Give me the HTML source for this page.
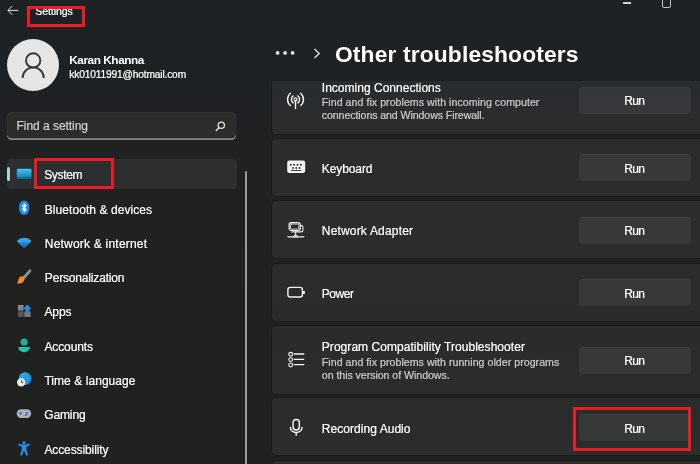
<!DOCTYPE html>
<html lang="en">
<head>
<meta charset="utf-8">
<title>Settings</title>
<style>
*{box-sizing:border-box;margin:0;padding:0}
html,body{width:700px;height:464px;overflow:hidden}
body{background:#202222;font-family:"Liberation Sans",sans-serif;color:#fff;position:relative;
 background:linear-gradient(180deg,#1e2225 0px,#1e2124 90px,#202122 150px,#212120 230px,#20211f 330px,#1f2221 464px)}
.t{position:absolute;white-space:nowrap;line-height:1;color:#fff;-webkit-text-stroke:0.22px currentColor}
.abs{position:absolute}
.nav{font-size:12.4px;left:45px}
.card{position:absolute;left:272px;width:440px;background:rgba(255,255,255,0.052);border-radius:4px;box-shadow:0 0 0 1px rgba(0,0,0,0.17)}
.btn{position:absolute;left:579px;width:112px;height:27px;background:rgba(255,255,255,0.06);border-radius:4px;box-shadow:inset 0 1px 0 rgba(255,255,255,0.045)}
.run{font-size:12.4px}
.ct{font-size:12.4px;left:322px}
.cd{font-size:10.6px;left:322px;color:#cdcdcd}
svg{position:absolute;overflow:visible}
</style>
</head>
<body>
<!-- title bar -->
<svg style="left:7px;top:5px" width="12" height="11" viewBox="0 0 12 11"><path d="M5.2 1 L1 5.4 L5.2 9.8 M1 5.4 H11.2" fill="none" stroke="#e6e6e6" stroke-width="1"/></svg>

<div class="abs" style="left:27px;top:6px;width:58px;height:21px;border:3px solid #ed1c24;z-index:5"></div>
<!-- window controls -->
<div class="abs" style="left:622.6px;top:2.3px;width:8.6px;height:1.3px;background:#d0d0d0"></div>
<div class="abs" style="left:661.8px;top:-4px;width:9.4px;height:11.8px;border:1.3px solid #c4c4c4;border-radius:2px"></div>

<!-- profile -->
<div class="abs" style="left:7px;top:38.7px;width:52.4px;height:52.4px;border-radius:50%;background:#e6e6e6"></div>
<svg style="left:0;top:0" width="100" height="100" viewBox="0 0 100 100"><g fill="none" stroke="#383838" stroke-width="1.9"><circle cx="33.2" cy="60.4" r="7.15"/><path d="M22.6 78 A10.6 10.6 0 0 1 43.8 78"/></g></svg>



<!-- search -->
<div class="abs" style="left:7px;top:111.7px;width:229.4px;height:28px;background:#2b2d2d;border-radius:4.5px;box-shadow:inset 0 -1.8px 0 #868888, inset 0 0 0 1px #2f3131"></div>

<svg style="left:0;top:0" width="300" height="200" viewBox="0 0 300 200"><circle cx="221.3" cy="125.3" r="3.15" fill="none" stroke="#e4e4e4" stroke-width="1.25"/><path d="M218.9 127.8 L216.2 130.5" stroke="#e4e4e4" stroke-width="1.4" stroke-linecap="round" fill="none"/></svg>

<!-- nav -->
<div class="abs" style="left:7px;top:159px;width:229.5px;height:30px;background:#2d2e2e;border-radius:4px"></div>
<div class="abs" style="left:7px;top:166.9px;width:3px;height:14px;background:#a8d4d8;border-radius:1.5px"></div>









<div class="abs" style="left:34px;top:158px;width:80px;height:31px;border:3px solid #ed1c24;z-index:5"></div>
<!-- scrollbar -->
<div class="abs" style="left:245px;top:171px;width:2px;height:300px;background:#9c9c9c;border-radius:1px"></div>

<!-- header -->
<svg style="left:0;top:0" width="700" height="100" viewBox="0 0 700 100"><g fill="#e2e2e2"><circle cx="277.6" cy="52.9" r="1.9"/><circle cx="285.1" cy="52.9" r="1.9"/><circle cx="292.6" cy="52.9" r="1.9"/></g></svg>
<svg style="left:313px;top:48px" width="8" height="11" viewBox="0 0 8 11"><path d="M1.5 1 L6.2 5.5 L1.5 10" fill="none" stroke="#e6e6e6" stroke-width="1.3"/></svg>


<!-- cards -->
<div class="card" style="top:70px;height:64px;clip-path:inset(11px -2px -2px -2px)"></div>
<div class="card" style="top:139px;height:57px"></div>
<div class="card" style="top:200.7px;height:57.6px"></div>
<div class="card" style="top:263.5px;height:57.5px"></div>
<div class="card" style="top:326px;height:67.5px"></div>
<div class="card" style="top:398.3px;height:57.2px"></div>
<div class="card" style="top:461px;height:57px"></div>












<div class="btn" style="top:87px"></div>
<div class="btn" style="top:154px"></div>
<div class="btn" style="top:216.5px"></div>
<div class="btn" style="top:279px"></div>
<div class="btn" style="top:346.5px"></div>
<div class="btn" style="top:414px"></div>
<div class="abs" style="left:573px;top:407px;width:118px;height:44px;border:3px solid #ed1c24;z-index:5"></div>

<svg style="left:0;top:0" width="700" height="464" viewBox="0 0 700 464">
<defs>
<linearGradient id="gsys" x1="0" y1="0" x2="0" y2="1"><stop offset="0" stop-color="#44c8ee"/><stop offset="0.7" stop-color="#1c8fc6"/><stop offset="0.86" stop-color="#15709c"/><stop offset="1" stop-color="#0f5c84"/></linearGradient>
<linearGradient id="gwifi" x1="0" y1="0" x2="0" y2="1"><stop offset="0" stop-color="#35b4f0"/><stop offset="1" stop-color="#0f6fc4"/></linearGradient>
<linearGradient id="gglobe" x1="0" y1="0" x2="1" y2="1"><stop offset="0" stop-color="#22b4e0"/><stop offset="1" stop-color="#1a7cd8"/></linearGradient>
</defs>
<!-- system -->
<rect x="16.8" y="168.8" width="14.7" height="10.2" rx="1" fill="url(#gsys)"/>
<!-- bluetooth -->
<rect x="19.1" y="200.5" width="10" height="14.4" rx="5" ry="5.6" fill="#1b8cf0"/>
<path d="M22 205.3 L26.1 209.6 L24.1 211.8 V203.5 L26.1 205.7 L22 210" fill="none" stroke="#fff" stroke-width="1.1" stroke-linejoin="round"/>
<!-- wifi -->
<path d="M24.15 247.8 L16.7 240.9 A10.6 10.6 0 0 1 31.6 240.9 Z" fill="#33a9ec"/>
<path d="M24.15 247.8 L19.2 243.2 A7.1 7.1 0 0 1 29.1 243.2 Z" fill="#1f8ada"/>
<path d="M24.15 247.8 L21.6 245.4 A3.7 3.7 0 0 1 26.7 245.4 Z" fill="#1670c6"/>
<!-- brush -->
<path d="M29.9 270.9 L23.6 278" stroke="#8d939a" stroke-width="2.9" stroke-linecap="round" fill="none"/>
<path d="M22 276.3 C24.2 276.6 25 279 23.8 281 C22.4 283.4 19.4 284 16.9 283.4 C18.4 282.2 18 280.4 18.7 278.8 C19.3 277.3 20.6 276.2 22 276.3 Z" fill="#f28d1c"/>
<!-- apps -->
<rect x="17.9" y="304.9" width="5.7" height="5.7" rx="0.6" fill="#82868b"/>
<rect x="17.9" y="311.3" width="5.7" height="5.8" rx="0.6" fill="#54575b"/>
<rect x="24.3" y="311.3" width="6.3" height="5.8" rx="0.6" fill="#75797e"/>
<path d="M27.3 304.6 L31 308.3 L27.3 312 L23.6 308.3 Z" fill="#1f90f0"/>
<!-- accounts -->
<circle cx="24.1" cy="342" r="3.6" fill="#1bb09c"/>
<path d="M18.3 347 H29.9 V347.6 A5.8 4.6 0 0 1 18.3 347.6 Z" fill="#20c4ac"/>
<!-- time -->
<circle cx="25.05" cy="378.6" r="6.4" fill="url(#gglobe)"/>
<path d="M25.05 372.4 C21.8 375 21.8 382.2 25.05 384.8 C28.3 382.2 28.3 375 25.05 372.4 M18.9 378.6 H31.2" fill="none" stroke="#5fd0f0" stroke-width="0.5" opacity="0.6"/>
<circle cx="21.2" cy="382.4" r="4.2" fill="#e9e9e9"/>
<path d="M21.5 379.8 V382.5 H23.3" fill="none" stroke="#4a4a4a" stroke-width="0.9"/>
<!-- gaming -->
<rect x="16.7" y="409.2" width="14.5" height="8.8" rx="4.4" fill="#aeb2b8"/>
<circle cx="20.6" cy="413.5" r="1.4" fill="#6c7076"/>
<rect x="26.1" y="411.9" width="1.9" height="1.9" rx="0.4" fill="#1574e0"/><rect x="25" y="414" width="1.9" height="1.9" rx="0.4" fill="#1574e0"/>
<!-- accessibility -->
<circle cx="24" cy="442.9" r="1.75" fill="#1e94ee"/>
<path d="M19.3 444.7 L22.6 446.1 H25.6 L28.9 444.7" fill="none" stroke="#1e94ee" stroke-width="2" stroke-linecap="round" stroke-linejoin="round"/>
<rect x="21.8" y="445.4" width="4.6" height="5.8" rx="0.6" fill="#1e94ee"/>
<path d="M22.9 450 L21.3 454.5 M25.3 450 L26.9 454.5" fill="none" stroke="#1e94ee" stroke-width="2.2" stroke-linecap="round"/>

<!-- right icons -->
<g fill="none" stroke="#f4f4f4" stroke-width="1.4" stroke-linecap="round">
<circle cx="295.5" cy="99.4" r="1.5" stroke-width="1.2"/>
<path d="M295.5 101 V108.6"/>
<path d="M290.4 93.3 A8 8 0 0 0 290.4 105.5 M300.6 93.3 A8 8 0 0 1 300.6 105.5"/>
<path d="M293.2 95.9 A4.3 4.3 0 0 0 293.2 102.9 M297.8 95.9 A4.3 4.3 0 0 1 297.8 102.9"/>
</g>
<!-- keyboard -->
<rect x="287.2" y="160.6" width="18" height="12.4" rx="2.2" fill="#f4f4f4"/>
<g fill="#2b2d2d">
<circle cx="290.8" cy="164.7" r="0.95"/><circle cx="294.1" cy="164.7" r="0.95"/><circle cx="297.5" cy="164.7" r="0.95"/><circle cx="300.8" cy="164.7" r="0.95"/>
<circle cx="293" cy="168" r="0.95"/><circle cx="296.3" cy="168" r="0.95"/><circle cx="299.6" cy="168" r="0.95"/>
<rect x="291" y="170" width="10.4" height="0.9"/>
</g>
<!-- network adapter -->
<g fill="none" stroke-linecap="round" stroke-linejoin="round">
<path d="M301 225.6 H301.6 A1.3 1.3 0 0 1 302.9 226.9 V230.2 A1.7 1.7 0 0 1 301.2 231.9 H292" stroke="#ececec" stroke-width="1.1"/>
<rect x="289.1" y="222.6" width="11.2" height="7.9" rx="2.2" stroke="#f6f6f6" stroke-width="1.15"/>
<rect x="290.55" y="224.05" width="8.3" height="5" rx="0.9" stroke="#f0f0f0" stroke-width="0.85"/>
<path d="M295.6 232.2 V234.6" stroke="#ececec" stroke-width="1"/>
<path d="M287.8 236.8 H303.9" stroke="#ececec" stroke-width="1.3"/>
<path d="M293.6 237 L295.6 234.6 L297.6 237 Z" fill="#ececec" stroke="#ececec" stroke-width="1.3"/>
<path d="M294.8 236.9 H296.4" stroke="#2b2d2d" stroke-width="0.6"/>
</g>
<!-- battery -->
<rect x="287.9" y="287.4" width="14.5" height="9.6" rx="2.2" fill="none" stroke="#f2f2f2" stroke-width="1.4"/>
<path d="M303 290.9 H304.2 Q305 290.9 305 291.7 V293.1 Q305 293.9 304.2 293.9 H303 Z" fill="#f2f2f2"/>
<!-- list -->
<g fill="none" stroke="#f2f2f2" stroke-width="1.3">
<circle cx="290.7" cy="354.3" r="1.9" stroke-width="1.15"/><circle cx="290.7" cy="359.6" r="1.9" stroke-width="1.15"/><circle cx="290.7" cy="364.9" r="1.9" stroke-width="1.15"/>
<path d="M294.2 354 H303.8 M294.2 359.3 H303.8 M294.2 364.6 H303.8" stroke-linecap="round"/>
</g>
<!-- mic -->
<g fill="none" stroke="#f4f4f4" stroke-width="1.45" stroke-linecap="round">
<rect x="293.05" y="419.5" width="6.3" height="10.5" rx="3.15"/>
<path d="M290.4 427.4 A5.8 5.2 0 0 0 302 427.4"/>
<path d="M296.2 432.8 V435.2"/>
</g>
</svg>
<div class="abs" style="left:0;top:0;width:700px;height:464px;will-change:transform"><span class="t" id="settings" style="left:35.20px;top:6.03px;font-size:10.6px;letter-spacing:-0.089px">Settings</span>
<span class="t" id="name" style="left:69.20px;top:54.51px;font-size:11.8px;letter-spacing:-0.437px;font-weight:bold;-webkit-text-stroke:0">Karan Khanna</span>
<span class="t" id="email" style="left:69.30px;top:69.57px;font-size:10.2px;letter-spacing:-0.152px">kk01011991@hotmail.com</span>
<span class="t" id="find" style="left:16.60px;top:120.34px;font-size:12px;letter-spacing:-0.050px;color:#d0d0d0">Find a setting</span>
<span class="t" id="n1" style="left:44.20px;top:168.84px;font-size:12px;letter-spacing:-0.343px">System</span>
<span class="t" id="n2" style="left:44.80px;top:203.84px;font-size:12px;letter-spacing:0.062px">Bluetooth &amp; devices</span>
<span class="t" id="n3" style="left:44.80px;top:237.84px;font-size:12px;letter-spacing:0.211px">Network &amp; internet</span>
<span class="t" id="n4" style="left:44.80px;top:271.84px;font-size:12px;letter-spacing:-0.169px">Personalization</span>
<span class="t" id="n5" style="left:44.40px;top:306.24px;font-size:12px;letter-spacing:-0.086px">Apps</span>
<span class="t" id="n6" style="left:44.40px;top:340.84px;font-size:12px;letter-spacing:-0.108px">Accounts</span>
<span class="t" id="n7" style="left:44.40px;top:374.84px;font-size:12px;letter-spacing:0.058px">Time &amp; language</span>
<span class="t" id="n8" style="left:44.20px;top:409.24px;font-size:12px;letter-spacing:-0.106px">Gaming</span>
<span class="t" id="n9" style="left:44.40px;top:443.84px;font-size:12px;letter-spacing:-0.105px">Accessibility</span>
<span class="t" id="title" style="left:335.00px;top:43.20px;font-size:22.8px;letter-spacing:0.140px;font-weight:bold;-webkit-text-stroke:0">Other troubleshooters</span>
<span class="t" id="c1" style="left:321.80px;top:81.84px;font-size:12px;letter-spacing:0.014px">Incoming Connections</span>
<span class="t" id="c1a" style="left:321.80px;top:97.03px;font-size:10.6px;letter-spacing:0.048px;color:#cbcbcb">Find and fix problems with incoming computer</span>
<span class="t" id="c1b" style="left:321.80px;top:110.03px;font-size:10.6px;letter-spacing:-0.085px;color:#cbcbcb">connections and Windows Firewall.</span>
<span class="t" id="c2" style="left:321.80px;top:163.24px;font-size:12px;letter-spacing:-0.096px">Keyboard</span>
<span class="t" id="c3" style="left:321.80px;top:225.24px;font-size:12px;letter-spacing:0.177px">Network Adapter</span>
<span class="t" id="c4" style="left:321.80px;top:287.94px;font-size:12px;letter-spacing:-0.454px">Power</span>
<span class="t" id="c5" style="left:321.80px;top:341.24px;font-size:12px;letter-spacing:0.048px">Program Compatibility Troubleshooter</span>
<span class="t" id="c5a" style="left:321.80px;top:357.23px;font-size:10.6px;letter-spacing:0.040px;color:#cbcbcb">Find and fix problems with running older programs</span>
<span class="t" id="c5b" style="left:321.80px;top:369.73px;font-size:10.6px;letter-spacing:-0.042px;color:#cbcbcb">on this version of Windows.</span>
<span class="t" id="c6" style="left:321.80px;top:422.74px;font-size:12px;letter-spacing:0.046px">Recording Audio</span>
<span class="t" id="r1" style="left:624.20px;top:95.34px;font-size:12px;letter-spacing:-0.608px">Run</span>
<span class="t" id="r2" style="left:624.20px;top:163.04px;font-size:12px;letter-spacing:-0.608px">Run</span>
<span class="t" id="r3" style="left:624.20px;top:225.44px;font-size:12px;letter-spacing:-0.608px">Run</span>
<span class="t" id="r4" style="left:624.20px;top:288.04px;font-size:12px;letter-spacing:-0.608px">Run</span>
<span class="t" id="r5" style="left:624.20px;top:355.44px;font-size:12px;letter-spacing:-0.608px">Run</span>
<span class="t" id="r6" style="left:624.20px;top:423.04px;font-size:12px;letter-spacing:-0.608px">Run</span></div>
</body>
</html>
